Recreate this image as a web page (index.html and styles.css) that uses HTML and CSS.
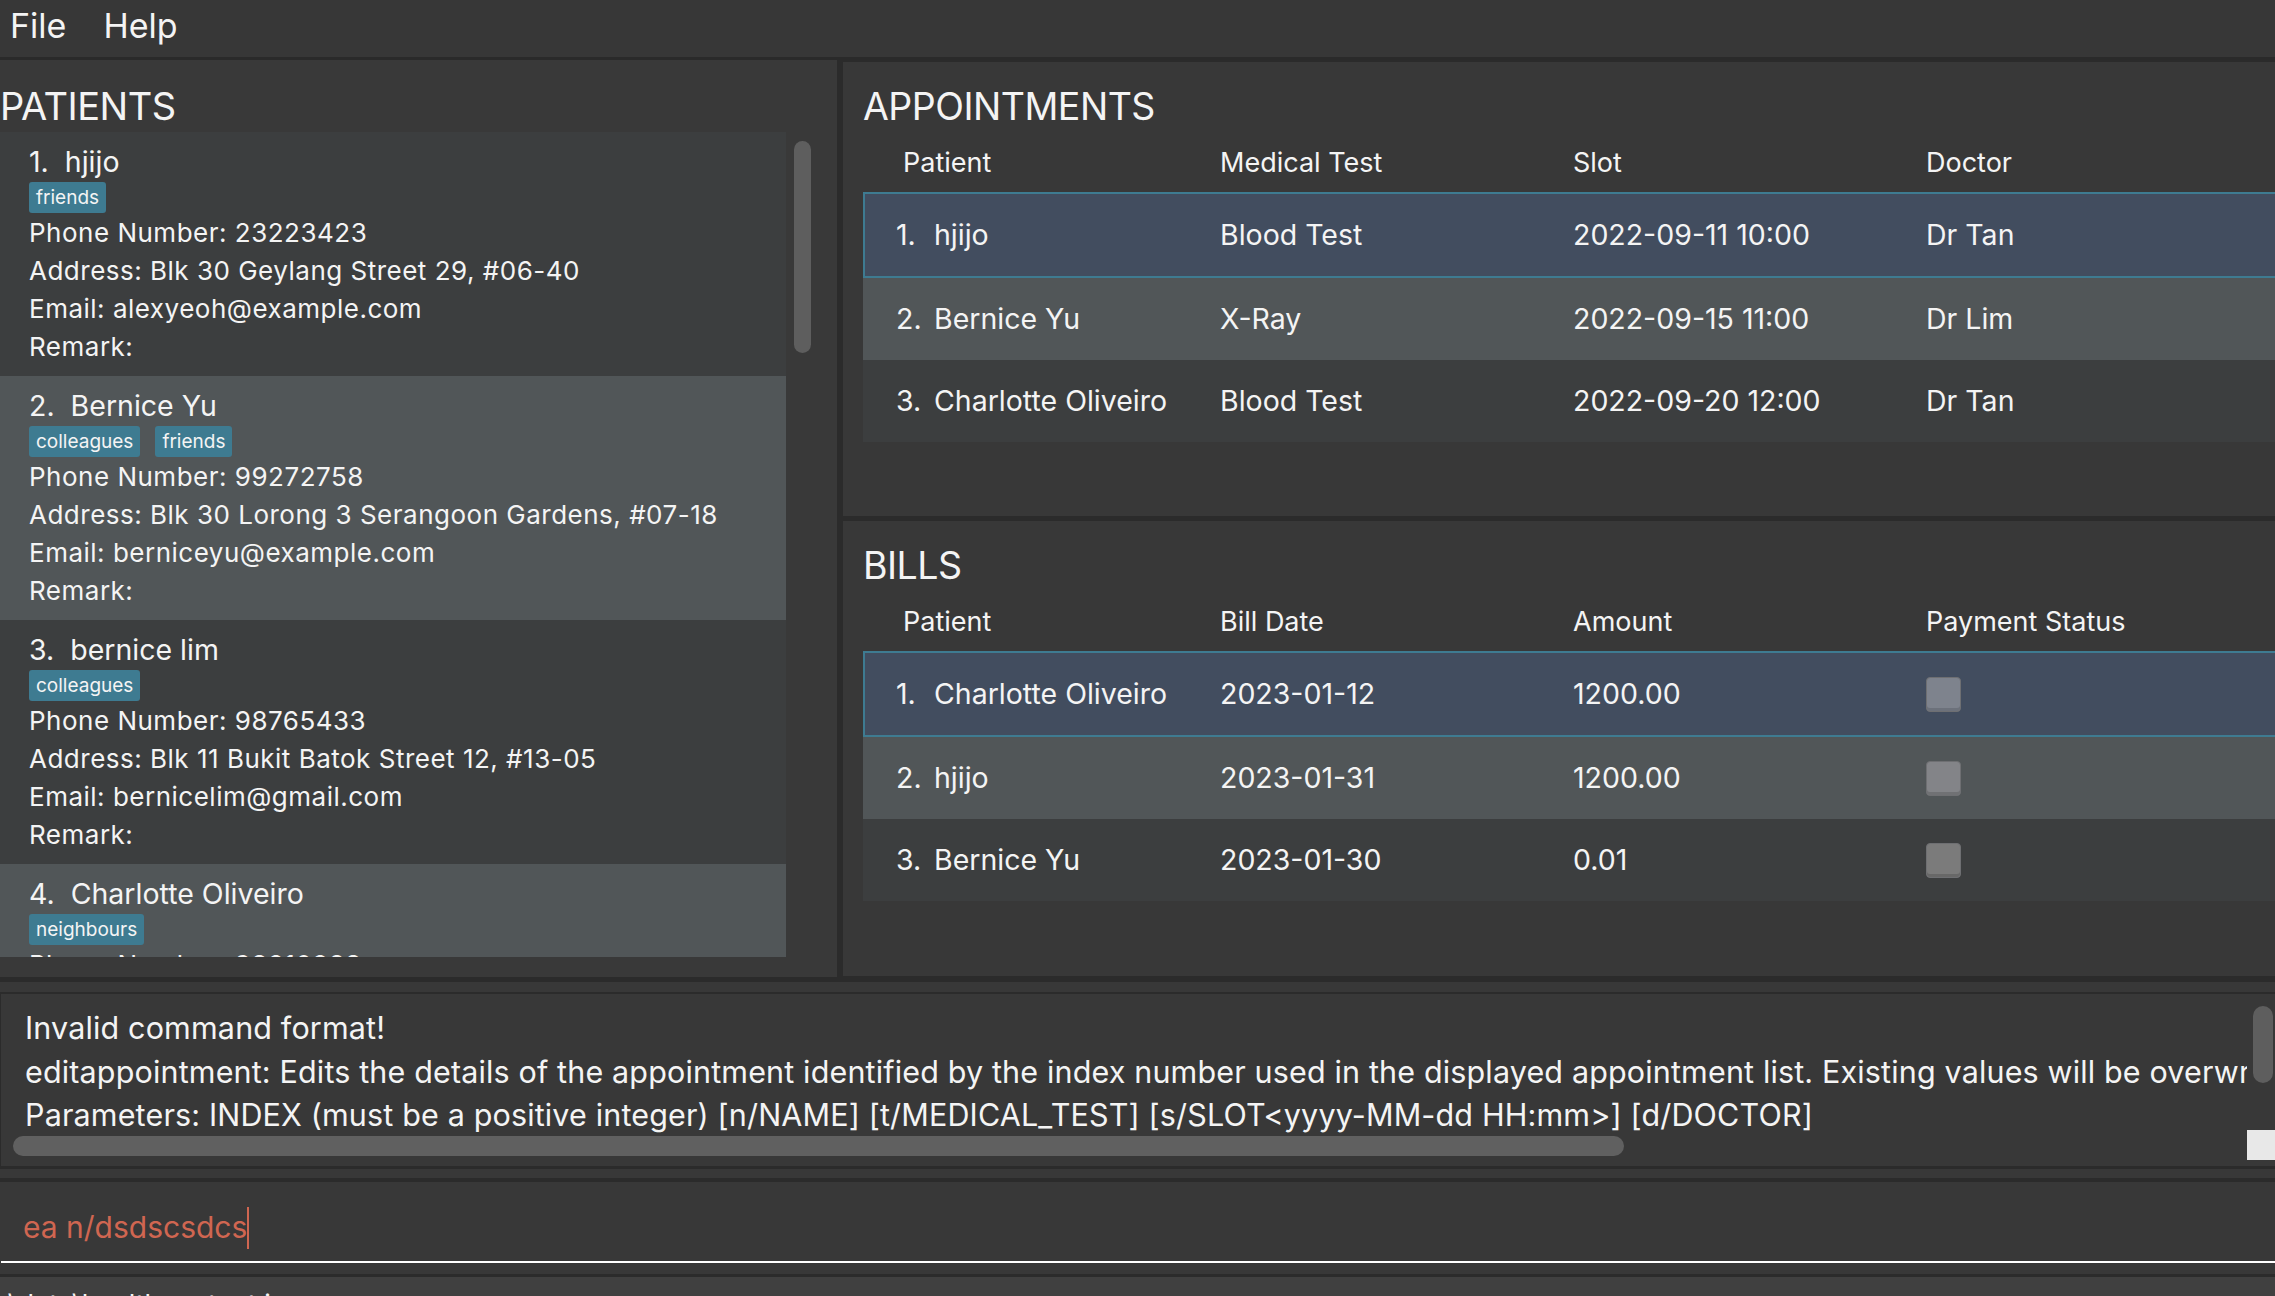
FILE: index.html
```html
<!DOCTYPE html>
<html lang="en">
<head>
<meta charset="utf-8">
<title>HealthContact</title>
<link rel="stylesheet" href="styles.css">
</head>
<body>
<div class="app">
  <div class="menubar">
    <span class="menu-item">File</span>
    <span class="menu-item">Help</span>
  </div>

  <div class="main">
    <section class="patients">
      <h2 class="panel-title">PATIENTS</h2>
      <div class="list-wrap">
        <div class="list">
          <div class="card even">
            <div class="card-name">1.&nbsp; hjijo</div>
            <div class="tags"><span class="tag">friends</span></div>
            <div class="card-line">Phone Number: 23223423</div>
            <div class="card-line">Address: Blk 30 Geylang Street 29, #06-40</div>
            <div class="card-line">Email: alexyeoh@example.com</div>
            <div class="card-line">Remark:</div>
          </div>
          <div class="card odd">
            <div class="card-name">2.&nbsp; Bernice Yu</div>
            <div class="tags"><span class="tag">colleagues</span><span class="tag">friends</span></div>
            <div class="card-line">Phone Number: 99272758</div>
            <div class="card-line">Address: Blk 30 Lorong 3 Serangoon Gardens, #07-18</div>
            <div class="card-line">Email: berniceyu@example.com</div>
            <div class="card-line">Remark:</div>
          </div>
          <div class="card even">
            <div class="card-name">3.&nbsp; bernice lim</div>
            <div class="tags"><span class="tag">colleagues</span></div>
            <div class="card-line">Phone Number: 98765433</div>
            <div class="card-line">Address: Blk 11 Bukit Batok Street 12, #13-05</div>
            <div class="card-line">Email: bernicelim@gmail.com</div>
            <div class="card-line">Remark:</div>
          </div>
          <div class="card odd">
            <div class="card-name">4.&nbsp; Charlotte Oliveiro</div>
            <div class="tags"><span class="tag">neighbours</span></div>
            <div class="card-line">Phone Number: 93210283</div>
            <div class="card-line">Address: Blk 436 Serangoon Gardens Street 26, #16-43</div>
            <div class="card-line">Email: charlotte@example.com</div>
            <div class="card-line">Remark:</div>
          </div>
        </div>
        <div class="vscroll"><div class="vthumb"></div></div>
      </div>
    </section>

    <div class="right">
      <section class="table-panel">
        <h2 class="panel-title">APPOINTMENTS</h2>
        <div class="thead">
          <div class="th first">Patient</div>
          <div class="th">Medical Test</div>
          <div class="th">Slot</div>
          <div class="th">Doctor</div>
        </div>
        <div class="trow selected">
          <div class="td first"><span class="idx">1.</span>hjijo</div>
          <div class="td">Blood Test</div>
          <div class="td">2022-09-11 10:00</div>
          <div class="td">Dr Tan</div>
        </div>
        <div class="trow odd">
          <div class="td first"><span class="idx">2.</span>Bernice Yu</div>
          <div class="td">X-Ray</div>
          <div class="td">2022-09-15 11:00</div>
          <div class="td">Dr Lim</div>
        </div>
        <div class="trow even">
          <div class="td first"><span class="idx">3.</span>Charlotte Oliveiro</div>
          <div class="td">Blood Test</div>
          <div class="td">2022-09-20 12:00</div>
          <div class="td">Dr Tan</div>
        </div>
      </section>

      <section class="table-panel bills">
        <h2 class="panel-title">BILLS</h2>
        <div class="thead">
          <div class="th first">Patient</div>
          <div class="th">Bill Date</div>
          <div class="th">Amount</div>
          <div class="th">Payment Status</div>
        </div>
        <div class="trow selected">
          <div class="td first"><span class="idx">1.</span>Charlotte Oliveiro</div>
          <div class="td">2023-01-12</div>
          <div class="td">1200.00</div>
          <div class="td"><span class="check sel"></span></div>
        </div>
        <div class="trow odd">
          <div class="td first"><span class="idx">2.</span>hjijo</div>
          <div class="td">2023-01-31</div>
          <div class="td">1200.00</div>
          <div class="td"><span class="check"></span></div>
        </div>
        <div class="trow even">
          <div class="td first"><span class="idx">3.</span>Bernice Yu</div>
          <div class="td">2023-01-30</div>
          <div class="td">0.01</div>
          <div class="td"><span class="check dark"></span></div>
        </div>
      </section>
    </div>
  </div>

  <div class="sep"></div>

  <div class="result-wrap">
    <div class="result">
      <div class="result-text">
        <div>Invalid command format!</div>
        <div>editappointment: Edits the details of the appointment identified by the index number used in the displayed appointment list. Existing values will be overwritten by the input values.</div>
        <div>Parameters: INDEX (must be a positive integer) [n/NAME] [t/MEDICAL_TEST] [s/SLOT&lt;yyyy-MM-dd HH:mm&gt;] [d/DOCTOR]</div>
      </div>
      <div class="hscroll"><div class="hthumb"></div></div>
      <div class="rvthumb"></div>
      <div class="corner"></div>
    </div>
  </div>

  <div class="cmd-wrap">
    <div class="cmd">
      <span class="cmd-text">ea n/dsdscsdcs</span><span class="caret"></span>
    </div>
  </div>

  <div class="status">.\data\healthcontact.json</div>
</div>
</body>
</html>
```

FILE: styles.css
```css
* {
  box-sizing: border-box;
  margin: 0;
  padding: 0;
}

body {
  margin: 0;
  background: #383838;
  font-family: Inter, "Noto Sans", "Liberation Sans", sans-serif;
  color: #f4f4f4;
  overflow: hidden;
}

.app {
  width: 2275px;
  height: 1296px;
  display: flex;
  flex-direction: column;
  background: #383838;
  overflow: hidden;
}

/* menu bar */
.menubar {
  height: 60px;
  flex: none;
  background: #373737;
  border-bottom: 3px solid #2a2a2a;
  display: flex;
  padding-left: 10px;
  gap: 37px;
}

.menu-item {
  font-size: 34px;
  line-height: 52px;
  color: #f4f4f4;
}

/* main split */
.main {
  height: 917px;
  flex: none;
  display: flex;
  gap: 6px;
  background: #2b2b2b;
}

.panel-title {
  font-weight: 400;
  font-size: 37.5px;
  line-height: 46px;
  color: #f4f4f4;
  letter-spacing: -0.5px;
}

.patients {
  width: 837px;
  flex: none;
  background: #393939;
  padding-top: 23px;
}

.patients .panel-title {
  font-size: 38px;
}

.list-wrap {
  margin-top: 3px;
  height: 825px;
  display: flex;
}

.list {
  width: 786px;
  flex: none;
  overflow: hidden;
}

.card {
  height: 244px;
  padding: 10px 0 10px 29px;
}

.card.even {
  background: #3c3e3f;
}

.card.odd {
  background: #515658;
}

.card-name {
  font-size: 28.5px;
  line-height: 40px;
}

.tags {
  display: flex;
  gap: 15px;
  height: 31px;
  margin-bottom: 1px;
}

.tag {
  background: #3e7b91;
  color: #f4f4f4;
  font-size: 19px;
  line-height: 31px;
  padding: 0 7px;
  border-radius: 3px;
}

.card-line {
  font-size: 26px;
  line-height: 38px;
  letter-spacing: 0.5px;
}

.vscroll {
  flex: 1;
  padding: 9px 0 0 8px;
}

.vthumb {
  width: 17px;
  height: 212px;
  border-radius: 9px;
  background: #5e5e5e;
}

/* right column */
.right {
  flex: 1;
  display: flex;
  flex-direction: column;
  gap: 5px;
  padding-top: 2px;
}

.table-panel {
  height: 454px;
  background: #383838;
  padding: 22px 0 0 20px;
}

.table-panel.bills {
  height: 455px;
}

.thead,
.trow {
  display: grid;
  grid-template-columns: 353px 353px 353px 353px;
}

.thead {
  height: 62px;
  padding-top: 4px;
}

.th {
  font-size: 27px;
  line-height: 58px;
  padding-left: 4px;
  color: #f4f4f4;
}

.th.first {
  padding-left: 40px;
}

.trow {
  height: 82px;
  font-size: 28.5px;
  line-height: 82px;
}

.trow.selected {
  height: 86px;
  padding: 2px 0;
  background: #424d5f;
  box-shadow: inset 2px 2px 0 #3e7b91, inset 0 -2px 0 #3e7b91;
}

.trow.odd {
  background: #515658;
}

.trow.even {
  background: #3c3e3f;
}

.td {
  padding-left: 4px;
  white-space: nowrap;
  display: flex;
  align-items: center;
}

.td.first {
  padding-left: 33px;
}

.idx {
  display: inline-block;
  width: 38px;
}

.check {
  display: block;
  width: 35px;
  height: 35px;
  border-radius: 4px;
  background: #838488;
  border: 1px solid #6e6f72;
  box-shadow: inset 0 -3px 0 #707174;
}

.check.sel {
  background: #7e838d;
  box-shadow: inset 0 -3px 0 #6c717b;
}

.check.dark {
  background: #7b7b7b;
  box-shadow: inset 0 -3px 0 #686868;
}

/* result display */
.sep {
  height: 5px;
  flex: none;
  background: #2b2b2b;
}

.result-wrap {
  flex: none;
  padding-top: 10px;
  background: #383838;
}

.result {
  position: relative;
  height: 177px;
  border-top: 2px solid #2b2b2b;
  border-left: 1px solid #2b2b2b;
  border-bottom: 3px solid #2b2b2b;
  background: #383838;
}

.result-text {
  width: 2246px;
  overflow: hidden;
  white-space: nowrap;
  padding: 12px 0 0 24px;
  font-size: 30.5px;
  line-height: 43.5px;
  letter-spacing: 0.15px;
  color: #f4f4f4;
}

.hscroll {
  position: absolute;
  left: 12px;
  top: 142px;
  width: 1611px;
  height: 20px;
}

.hthumb {
  width: 100%;
  height: 100%;
  border-radius: 10px;
  background: #606060;
}

.rvthumb {
  position: absolute;
  right: 2px;
  top: 12px;
  width: 20px;
  height: 77px;
  border-radius: 10px;
  background: #5e5e5e;
}

.corner {
  position: absolute;
  right: 0;
  top: 136px;
  width: 28px;
  height: 30px;
  background: #e8e8e8;
}

/* command box */
.cmd-wrap {
  flex: none;
  padding-top: 9px;
  background: #383838;
}

.cmd {
  height: 99px;
  border-top: 4px solid #2b2b2b;
  padding: 25px 0 0 23px;
  display: flex;
  align-items: flex-start;
  background: #383838;
  border-bottom: 3px solid #2b2b2b;
  position: relative;
}

.cmd::after {
  content: "";
  position: absolute;
  left: 1px;
  right: 0;
  top: 79px;
  height: 2px;
  background: #ffffff;
}

.cmd-text {
  font-size: 30px;
  line-height: 40px;
  color: #d06651;
}

.caret {
  width: 2px;
  height: 42px;
  margin-top: 0;
  background: #d06651;
}

.status {
  flex: 1;
  background: #404040;
  font-size: 27px;
  line-height: 40px;
  padding-left: 0;
  color: #f4f4f4;
  padding-top: 8px;
  overflow: hidden;
}
```
